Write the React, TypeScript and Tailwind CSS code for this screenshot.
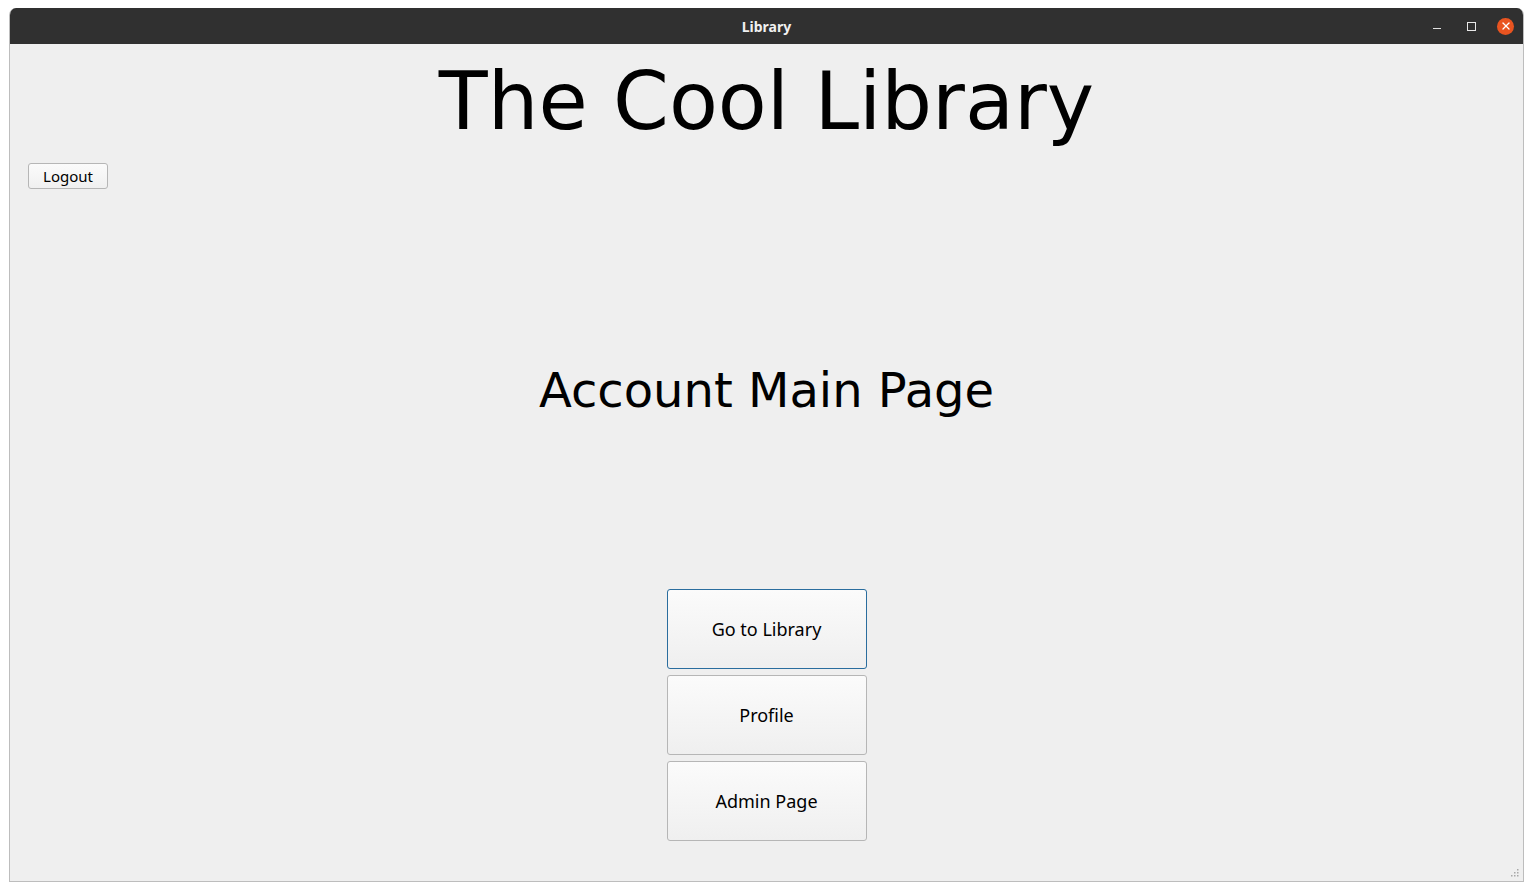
import { X } from 'lucide-react';

function GripDots() {
  const dots = [
    [2, 0],
    [1, 1],
    [2, 1],
    [0, 2],
    [1, 2],
    [2, 2],
  ];
  return (
    <svg width="12" height="12" className="absolute bottom-[2px] right-[2px]">
      {dots.map(([x, y]) => (
        <rect key={`${x}-${y}`} x={x * 3 + 2} y={y * 3 + 2} width="1.5" height="1.5" fill="#a8a8a8" />
      ))}
    </svg>
  );
}

function BigButton({ label, focused }: { label: string; focused?: boolean }) {
  return (
    <button
      className={`flex h-[80px] w-[200px] items-center justify-center rounded-[3px] border bg-gradient-to-b from-[#fbfbfb] to-[#efefef] text-[18px] text-black ${
        focused ? 'border-[#2a6d9e]' : 'border-[#b6b6b6]'
      }`}
    >
      {label}
    </button>
  );
}

export default function App() {
  return (
    <div className="h-[891px] w-[1533px] bg-white pl-[9px] pt-[8px] font-['Noto_Sans',sans-serif]">
      <div className="flex h-[874px] w-[1515px] flex-col overflow-hidden rounded-t-[7px] border-x border-b border-[#bdbdbd]">
        <div className="relative flex h-[36px] shrink-0 items-center justify-center bg-[#303030] text-[14px] font-bold text-[#f0f0f0]">
          <span>Library</span>
          <div className="absolute right-[9px] top-0 flex h-full items-center">
            <span className="mr-[26px] mt-[4px] block h-px w-[8px] bg-[#e0e0e0]" />
            <span className="mr-[21px] block h-[9px] w-[9px] border border-[#e8e8e8]" />
            <span className="flex h-[17px] w-[17px] items-center justify-center rounded-full bg-[#e95420]">
              <X size={12} strokeWidth={2.6} color="#ffffff" />
            </span>
          </div>
        </div>
        <div className="relative flex flex-1 flex-col bg-[#efefef]">
          <h1 className="mt-[8px] text-center font-['DejaVu_Sans',sans-serif] text-[80px] leading-[100px] text-black">
            The Cool Library
          </h1>
          <div className="ml-[18px] mt-[11px]">
            <button className="h-[26px] w-[80px] rounded-[3px] border border-[#b6b6b6] bg-gradient-to-b from-[#fbfbfb] to-[#f0f0f0] text-[15px] text-black">
              Logout
            </button>
          </div>
          <h2 className="mt-[166px] text-center font-['DejaVu_Sans',sans-serif] text-[48px] leading-[70px] text-black">
            Account Main Page
          </h2>
          <div className="mt-[164px] flex flex-col items-center gap-[6px]">
            <BigButton label="Go to Library" focused />
            <BigButton label="Profile" />
            <BigButton label="Admin Page" />
          </div>
          <GripDots />
        </div>
      </div>
    </div>
  );
}
